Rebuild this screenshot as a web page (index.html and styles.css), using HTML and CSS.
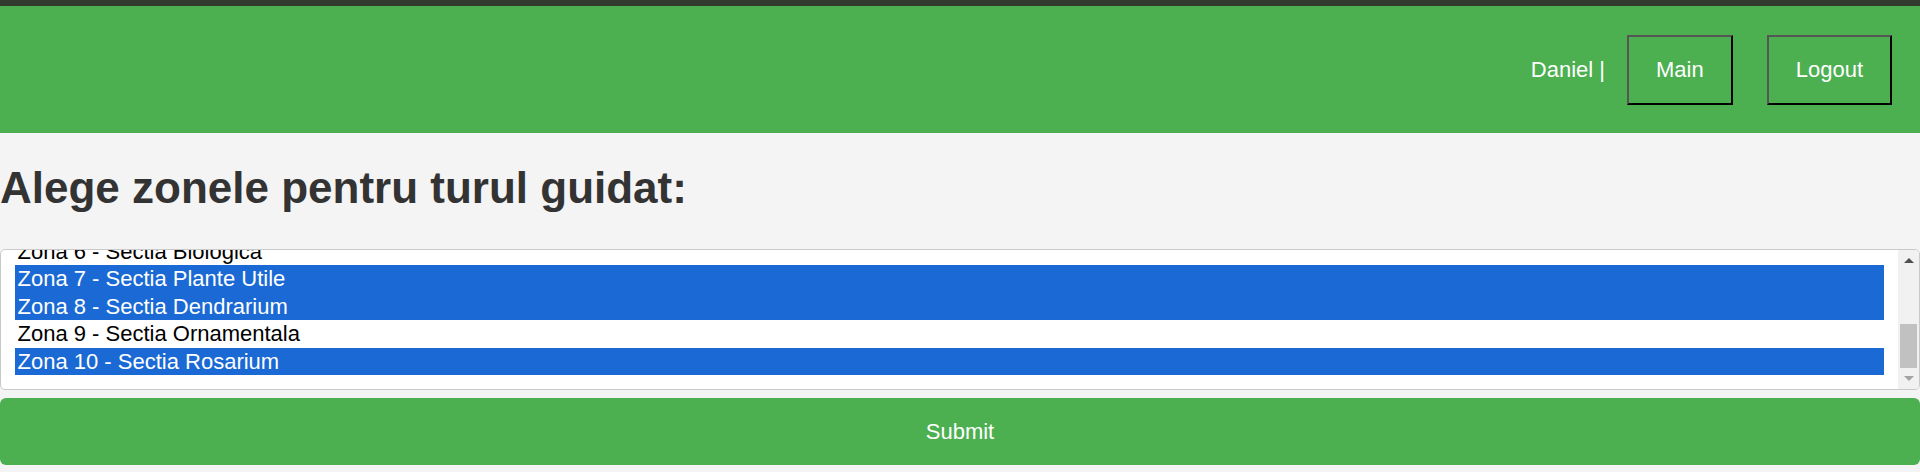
FILE: index.html
```html
<!DOCTYPE html>
<html lang="ro">
<head>
<meta charset="utf-8">
<title>Tur ghidat</title>
<link rel="stylesheet" href="styles.css">
</head>
<body>
<div class="topbar"></div>
<header class="header">
  <span class="user">Daniel |</span>
  <a class="nav-btn" href="#">Main</a>
  <a class="nav-btn nav-logout" href="#">Logout</a>
</header>
<main class="content">
  <h1 class="title">Alege zonele pentru turul guidat:</h1>
  <form class="form">
    <div class="listbox">
      <div class="list" id="list">
        <div class="opt">Zona 1 - Sectia Flora Romaniei</div>
        <div class="opt">Zona 2 - Sectia Sistematica</div>
        <div class="opt">Zona 3 - Sectia Flora Mediteraneana</div>
        <div class="opt">Zona 4 - Sectia Sere</div>
        <div class="opt">Zona 5 - Sectia Ecologica</div>
        <div class="opt">Zona 6 - Sectia Biologica</div>
        <div class="opt sel">Zona 7 - Sectia Plante Utile</div>
        <div class="opt sel">Zona 8 - Sectia Dendrarium</div>
        <div class="opt">Zona 9 - Sectia Ornamentala</div>
        <div class="opt sel">Zona 10 - Sectia Rosarium</div>
      </div>
      <div class="scrollbar">
        <div class="sb-btn"><span class="arrow-up"></span></div>
        <div class="sb-track"><div class="sb-thumb"></div></div>
        <div class="sb-btn"><span class="arrow-down"></span></div>
      </div>
    </div>
    <button type="button" class="submit">Submit</button>
  </form>
</main>
<script src="script.js"></script>
</body>
</html>
```

FILE: styles.css
```css
* { box-sizing: border-box; }
html, body { margin: 0; padding: 0; }
body {
  background: #f4f4f4;
  font-family: "Liberation Sans", Arial, sans-serif;
  color: #333;
  width: 1920px;
  height: 472px;
  overflow: hidden;
}
.topbar { height: 6px; background: #333b2f; }
.header {
  height: 127px;
  background: #4caf50;
  display: flex;
  justify-content: flex-end;
  align-items: center;
  padding-right: 28px;
  font-size: 22px;
  color: #fff;
}
.user { margin-right: 22px; }
.nav-btn {
  display: flex;
  align-items: center;
  justify-content: center;
  height: 70px;
  padding: 0 27px;
  color: #fff;
  text-decoration: none;
  border: 2px solid;
  border-color: #555 #000 #000 #555;
}
.nav-logout { margin-left: 34px; }
.title {
  margin: 29px 0 36px;
  font-size: 44px;
  line-height: 51px;
  font-weight: bold;
  color: #333;
}
.form { display: flex; flex-direction: column; gap: 8px; }
.listbox {
  height: 141px;
  display: flex;
  background: #fff;
  border: 1px solid #c9c9c9;
  border-radius: 5px;
  overflow: hidden;
}
.list {
  flex: 1;
  overflow: hidden;
  padding: 14px;
  font-size: 22px;
  color: #000;
}
.opt {
  height: 27.5px;
  line-height: 27.5px;
  padding-left: 2.5px;
  white-space: nowrap;
}
.opt.sel { background: #1a69d4; color: #fff; }
.scrollbar {
  width: 21px;
  background: #f1f1f1;
  display: flex;
  flex-direction: column;
}
.sb-btn {
  height: 21px;
  display: flex;
  align-items: center;
  justify-content: center;
}
.arrow-up {
  width: 0; height: 0;
  border-left: 5px solid transparent;
  border-right: 5px solid transparent;
  border-bottom: 5px solid #505050;
}
.arrow-down {
  width: 0; height: 0;
  border-left: 5px solid transparent;
  border-right: 5px solid transparent;
  border-top: 5px solid #a3a3a3;
}
.sb-track {
  flex: 1;
  display: flex;
  flex-direction: column;
  justify-content: flex-end;
  padding: 0 2px;
}
.sb-thumb { height: 44px; background: #c1c1c1; }
.submit {
  height: 67px;
  width: 100%;
  border: none;
  border-radius: 6px;
  background: #4caf50;
  color: #fff;
  font-family: "Liberation Sans", Arial, sans-serif;
  font-size: 22px;
}
```

FILE: script.js
```js
var list = document.getElementById('list');
list.scrollTop = list.scrollHeight;
```
